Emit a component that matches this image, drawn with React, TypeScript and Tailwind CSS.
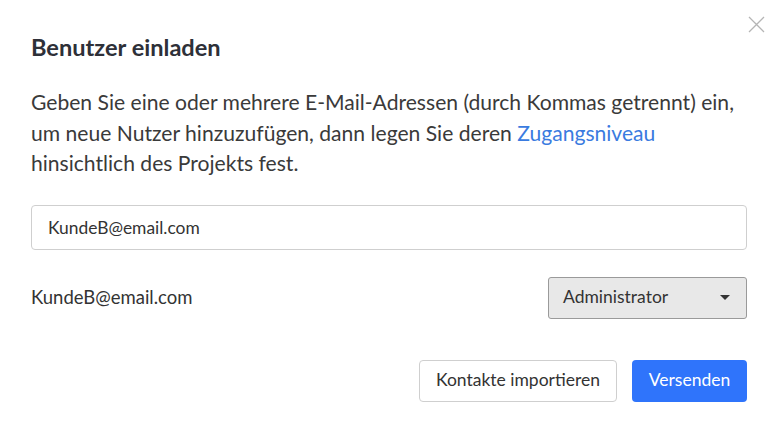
import { type JSX } from "react"

function EinladenDialog(): JSX.Element {
    return (
        <div className="relative w-[784px] h-[434px] bg-white font-['Lato','Liberation_Sans',sans-serif] text-[#333]">
            {/* Schließen */}
            <button className="absolute top-[16px] left-[748px] w-[17px] h-[17px] text-[#b5b5b5]">
                <svg viewBox="0 0 17 17" width="17" height="17" fill="none" stroke="currentColor" strokeWidth="1.3">
                    <path d="M1 1 L16 16 M16 1 L1 16" />
                </svg>
            </button>

            <div className="pl-[31px] pr-[37px] pt-[31px]">
                <h2 className="text-[23.6px] leading-[32px] font-bold text-[#2e3038]">Benutzer einladen</h2>

                <p className="mt-[24px] text-[21.1px] leading-[30.5px] text-[#3a3a3a] whitespace-nowrap">
                    Geben Sie eine oder mehrere E-Mail-Adressen (durch Kommas getrennt) ein,<br />
                    um neue Nutzer hinzuzufügen, dann legen Sie deren{" "}
                    <a href="#" className="text-[#3a7be0]">Zugangsniveau</a><br />
                    hinsichtlich des Projekts fest.
                </p>

                <input
                    type="text"
                    defaultValue="KundeB@email.com"
                    className="mt-[26px] w-full h-[45px] px-[16px] border border-[#cfcfcf] rounded-[4px] text-[17.4px] text-[#333] outline-none"
                />

                <div className="mt-[27px] flex items-center justify-between">
                    <span className="text-[18.5px] text-[#333]">KundeB@email.com</span>
                    <button className="w-[199px] h-[42px] flex items-center justify-between pl-[14px] pr-[16px] bg-[#e8e8e8] border border-[#9a9a9a] rounded-[3px] text-[17.5px] text-[#333]">
                        Administrator
                        <svg width="10" height="5" viewBox="0 0 10 5"><path d="M0 0 H10 L5 5 Z" fill="#333" /></svg>
                    </button>
                </div>

                <div className="mt-[41px] flex justify-end gap-[15px]">
                    <button className="h-[42px] w-[198px] border border-[#cfcfcf] rounded-[4px] bg-white text-[17.5px] text-[#333]">
                        Kontakte importieren
                    </button>
                    <button className="h-[42px] w-[115px] rounded-[4px] bg-[#2f74fb] text-[17.5px] text-white">
                        Versenden
                    </button>
                </div>
            </div>
        </div>
    );
}

export default EinladenDialog;
